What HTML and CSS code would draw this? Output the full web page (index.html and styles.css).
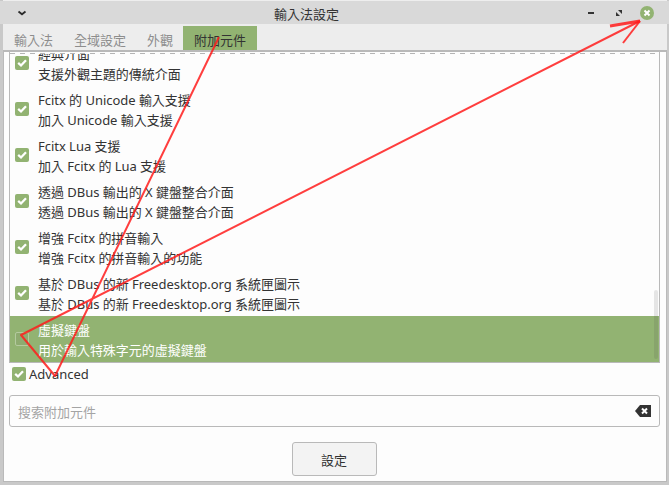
FILE: index.html
```html
<!DOCTYPE html>
<html lang="zh-Hant">
<head>
<meta charset="utf-8">
<title>輸入法設定</title>
<link rel="stylesheet" href="styles.css">
</head>
<body>
<svg class="defs" width="0" height="0"><defs>
<symbol id="check" viewBox="0 0 14 14"><path d="M3.2 6.9 6 9.5 11 4.2" fill="none" stroke="#fff" stroke-width="2.3"/></symbol>
</defs></svg>
<div class="window">
  <header class="titlebar">
    <svg class="menu" width="10" height="6" viewBox="0 0 10 6"><path d="M1.5 1.5 5 4.3 8.5 1.5" fill="none" stroke="#2b2b2b" stroke-width="1.8"/></svg>
    <h1>輸入法設定</h1>
    <div class="controls">
      <svg width="6" height="14" viewBox="0 0 6 14"><path d="M0 7h6" stroke="#333" stroke-width="2"/></svg>
      <svg width="6" height="6" viewBox="0 0 6 6"><path d="M2 0h4v4zM0 2v4h4z" fill="#333"/></svg>
      <svg width="14" height="14" viewBox="0 0 14 14"><circle cx="7" cy="7" r="7" fill="#92b372"/><path d="m4.5 4.5 5 5m0-5-5 5" stroke="#fff" stroke-width="2"/></svg>
    </div>
  </header>
  <nav class="tabs"><span>輸入法</span><span>全域設定</span><span>外觀</span><span class="active">附加元件</span></nav>
  <main class="page">
    <div class="list">
      <div class="rows">
        <div class="row"><svg class="box"><use href="#check"/></svg><p>經典介面<br>支援外觀主題的傳統介面</p></div>
        <div class="row"><svg class="box"><use href="#check"/></svg><p>Fcitx 的 Unicode 輸入支援<br>加入 Unicode 輸入支援</p></div>
        <div class="row"><svg class="box"><use href="#check"/></svg><p>Fcitx Lua 支援<br>加入 Fcitx 的 Lua 支援</p></div>
        <div class="row"><svg class="box"><use href="#check"/></svg><p>透過 DBus 輸出的 X 鍵盤整合介面<br>透過 DBus 輸出的 X 鍵盤整合介面</p></div>
        <div class="row"><svg class="box"><use href="#check"/></svg><p>增強 Fcitx 的拼音輸入<br>增強 Fcitx 的拼音輸入的功能</p></div>
        <div class="row"><svg class="box"><use href="#check"/></svg><p>基於 DBus 的新 Freedesktop.org 系統匣圖示<br>基於 DBus 的新 Freedesktop.org 系統匣圖示</p></div>
        <div class="row selected"><span class="box empty"></span><p>虛擬鍵盤<br>用於輸入特殊字元的虛擬鍵盤</p></div>
      </div>
      <div class="scroll"></div>
    </div>
    <label class="advanced"><svg class="box"><use href="#check"/></svg><span>Advanced</span></label>
    <div class="search"><span>搜索附加元件</span>
      <svg width="16" height="12" viewBox="0 0 16 12"><path d="M5 0h11v12H5L0 6z" fill="#333"/><path d="m7 3.5 5 5m0-5-5 5" stroke="#fff" stroke-width="2"/></svg>
    </div>
    <button class="configure">設定</button>
  </main>
</div>
<svg class="marks" width="669" height="485" viewBox="0 0 669 485"><path d="M219 37 55 376 21 335 640 21"/><path class="head" d="m610 26 30-5"/><path d="m640 21-17 22"/></svg>
</body>
</html>
```
FILE: styles.css
```css
* { box-sizing: border-box; }
body {
  margin: 0;
  width: 669px;
  height: 485px;
  overflow: hidden;
  background: #c9c9c9;
  color: #333;
  font: 13px/20px "Noto Sans", "Noto Sans CJK TC", sans-serif;
}
.defs { position: absolute; }
.window {
  height: 482px;
  margin: 0 2px 0 3px;
  border-top: 1px solid #eee;
  border-bottom: 1px solid #b8b8b8;
  display: flex;
  flex-direction: column;
  background: #fdfdfd;
}
.titlebar {
  height: 23px;
  flex: none;
  display: grid;
  grid-template-columns: 70px 1fr 70px;
  align-items: center;
  background: #d9d9d9;
  margin: 0 -2px 0 -3px;
  padding: 0 15px 0 17px;
}
h1 {
  margin: 3px 0 0;
  padding-right: 58px;
  font-size: 13px;
  font-weight: 400;
  text-align: center;
}
.controls { display: flex; justify-content: flex-end; align-items: center; gap: 22px; }
.controls svg:last-child { margin-left: -4px; }
.tabs {
  height: 28px;
  flex: none;
  display: flex;
  padding-top: 2px;
  background: #ededed;
  border-bottom: 2px solid #b9b9b9;
  color: #8d8d8d;
}
.tabs span { height: 24px; padding: 2px 11px 0; line-height: 24px; }
.tabs span + span { margin-left: -1px; }
.tabs .active { background: #92b372; color: #333; }
.page {
  flex: 1;
  display: flex;
  flex-direction: column;
  padding: 0 6px 0 5px;
  border: solid #bababa;
  border-width: 0 1px;
}
.list {
  position: relative;
  height: 311px;
  flex: none;
  border: solid #b9b9b9;
  border-width: 0 1px 1px;
  overflow: hidden;
}
.list::before {
  content: "";
  position: absolute;
  inset: 0 0 auto;
  height: 2px;
  background: linear-gradient(#fdfdfd 1px, transparent 1px), repeating-linear-gradient(90deg, #b5b5b5 0 5px, #fdfdfd 5px 10px);
}
.rows { margin-top: -12px; }
.row { height: 46px; display: flex; align-items: center; gap: 9px; padding-left: 5px; }
.row p { margin: 2px 0 0; white-space: nowrap; letter-spacing: -.03px; }
.box { width: 14px; height: 14px; flex: none; border-radius: 2px; background: #92b372; }
.selected { background: #92b372; color: #fff; }
.empty { border: 1px solid #b4ca9f; background: #8eab70; }
.scroll {
  position: absolute;
  right: 1px;
  bottom: 3px;
  width: 4px;
  height: 69px;
  border-radius: 2px;
  background: rgba(70, 70, 70, .13);
}
.advanced { height: 22px; display: flex; align-items: center; gap: 3px; padding-left: 3px; }
.advanced span { margin-top: -1px; }
.search {
  height: 32px;
  margin-top: 10px;
  border: 1px solid #b9b9b9;
  border-radius: 3px;
  display: flex;
  align-items: center;
  justify-content: space-between;
  padding: 0 8px;
  color: #a4a4a4;
}
.search span { margin-top: 1px; }
.configure {
  width: 85px;
  height: 34px;
  margin: 15px 0 0 283px;
  padding: 1px 1px 0 0;
  border: 1px solid #b9b9b9;
  border-radius: 3px;
  background: #f3f3f3;
  color: #333;
  font: inherit;
}
.marks { position: absolute; inset: 0; fill: none; stroke: #ff1c1c; stroke-opacity: .85; stroke-width: 2; stroke-linejoin: round; pointer-events: none; }
.head { stroke-width: 2.8; }
```
